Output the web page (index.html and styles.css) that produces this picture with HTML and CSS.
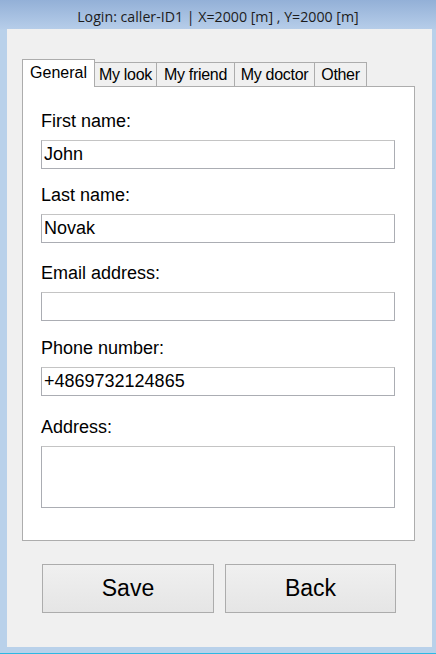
FILE: index.html
```
<!DOCTYPE html>
<html>
<head>
<meta charset="utf-8">
<link rel="stylesheet" href="styles.css">
</head>
<body>
<div class="window">
  <div class="titlebar">Login: caller-ID1 | X=2000 [m] , Y=2000 [m]</div>
  <div class="client">
    <div class="tabs">
      <div class="tab tab-active tab-general">General</div>
      <div class="tab tab-look">My look</div>
      <div class="tab tab-friend">My friend</div>
      <div class="tab tab-doctor">My doctor</div>
      <div class="tab tab-other">Other</div>
    </div>
    <div class="panel">
      <div class="field f1">
        <div class="label">First name:</div>
        <div class="input">John</div>
      </div>
      <div class="field f2">
        <div class="label">Last name:</div>
        <div class="input">Novak</div>
      </div>
      <div class="field f3">
        <div class="label">Email address:</div>
        <div class="input"></div>
      </div>
      <div class="field f4">
        <div class="label">Phone number:</div>
        <div class="input">+4869732124865</div>
      </div>
      <div class="field f5">
        <div class="label">Address:</div>
        <div class="input textarea"></div>
      </div>
    </div>
    <div class="buttons">
      <div class="btn btn-save">Save</div>
      <div class="btn btn-back">Back</div>
    </div>
  </div>
</div>
</body>
</html>
```
FILE: styles.css
```
html, body {
  margin: 0;
  padding: 0;
}
body {
  width: 436px;
  height: 654px;
  background: #b9d1ea;
  font-family: "Liberation Sans", Arial, sans-serif;
  color: #000;
  overflow: hidden;
}
.window {
  box-sizing: border-box;
  width: 436px;
  height: 654px;
  padding: 0 4px 6px 7px;
  border-bottom: 1px solid #2db8e3;
  display: flex;
  flex-direction: column;
  background: linear-gradient(to bottom, #93b0d7 0px, #b6cde9 29px, #b9d1ea 30px);
}
.titlebar {
  height: 29px;
  margin-left: -7px;
  margin-right: -4px;
  display: flex;
  align-items: center;
  justify-content: center;
  font-family: "Open Sans", "Noto Sans", sans-serif;
  font-size: 14.2px;
  color: #1c1c1c;
  padding-top: 3px;
  box-sizing: border-box;
}
.client {
  flex: 1;
  background: #f0f0f0;
  padding: 30px 0 0 15px;
  display: flex;
  flex-direction: column;
}
.tabs {
  display: flex;
  align-items: flex-end;
  height: 28px;
  position: relative;
  z-index: 1;
  margin-bottom: -1px;
}
.tab {
  box-sizing: border-box;
  height: 24px;
  border: 1px solid #acacac;
  border-bottom: none;
  border-left: none;
  background: #f0f0f0;
  font-size: 16px;
  line-height: 23px;
  text-align: center;
  white-space: nowrap;
  letter-spacing: -0.3px;
  margin-bottom: 1px;
}
.tab-active {
  height: 28px;
  background: #fff;
  border-left: 1px solid #acacac;
  line-height: 25px;
  margin-bottom: 0;
  letter-spacing: 0;
}
.tab-general { width: 73px; }
.tab-look { width: 62px; }
.tab-friend { width: 78px; }
.tab-doctor { width: 80px; }
.tab-other { width: 52px; }
.panel {
  box-sizing: border-box;
  width: 393px;
  height: 455px;
  background: #fff;
  border: 1px solid #adadad;
  padding: 24px 19px 0 18px;
  display: flex;
  flex-direction: column;
}
.field {
  display: flex;
  flex-direction: column;
}
.f2 { margin-top: 16px; }
.f3 { margin-top: 20px; }
.f4 { margin-top: 17px; }
.f5 { margin-top: 21px; }
.label {
  font-size: 18px;
  line-height: 21px;
  margin-bottom: 8px;
}
.input {
  box-sizing: border-box;
  height: 29px;
  border: 1px solid #abadb3;
  border-top-color: #c4c4c4;
  font-size: 18px;
  line-height: 27px;
  padding-left: 2px;
}
.textarea {
  height: 62px;
}
.buttons {
  display: flex;
  gap: 11px;
  margin: 23px 0 0 20px;
}
.btn {
  box-sizing: border-box;
  height: 49px;
  border: 1px solid #acacac;
  background: linear-gradient(to bottom, #f0f0f0, #e5e5e5);
  font-size: 23px;
  display: flex;
  align-items: center;
  justify-content: center;
}
.btn-save { width: 172px; }
.btn-back { width: 171px; }
```
